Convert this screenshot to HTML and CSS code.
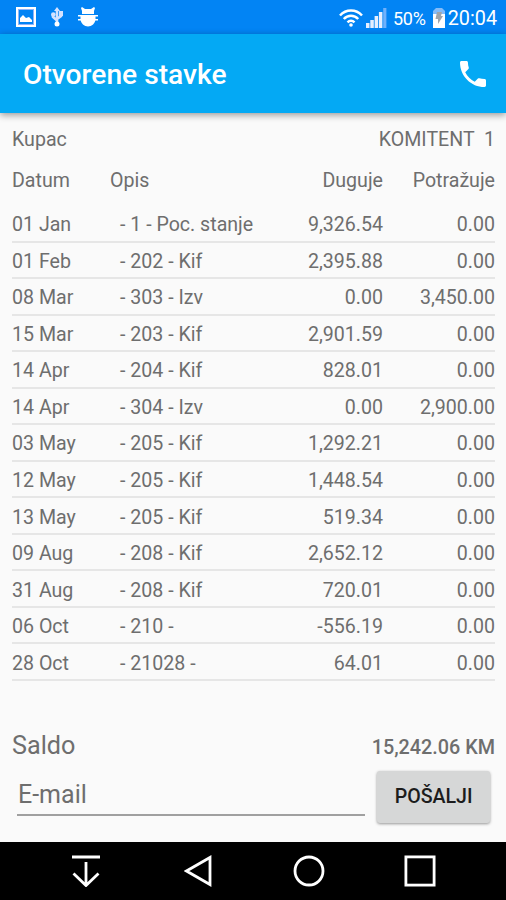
FILE: index.html
```html
<!DOCTYPE html>
<html lang="sr">
<head>
    <meta charset="UTF-8">
    <meta name="viewport" content="width=device-width, initial-scale=1.0">
    <link rel="stylesheet" href="styles.css">
    <title>Otvorene stavke</title>
</head>
<body>
    <div class="status-bar">
        <svg class="icon-picture" width="20" height="20" viewBox="0 0 20 20">
            <rect x="1" y="1" width="18" height="18" fill="none" stroke="#fff" stroke-width="2"/>
            <rect x="2.500" y="2.500" width="15" height="15" fill="none" stroke="#8fb4fb"/>
            <path d="M4 15v-4l3-3 3 3 3-1 3 3v2z" fill="#fff"/>
        </svg>
        <svg class="icon-usb" width="12" height="20" viewBox="0 0 12 20">
            <path d="M6 17V3M6 13.500L2 10V7M6 12l4-3V5" fill="none" stroke="#d5e2ff" stroke-width="2.600"/>
            <path d="M6 0l3 4H3z" fill="#d5e2ff"/>
            <circle cx="6" cy="17" r="2.500" fill="#fff"/>
            <circle cx="2.300" cy="7.500" r="2.300" fill="#d5e2ff"/>
            <rect x="8" y="4" width="4" height="5" fill="#d5e2ff"/>
        </svg>
        <svg class="icon-debug" width="20" height="20" viewBox="0 0 20 20">
            <path d="M4 0l3 2h6l3-2 1 1-1 3v3H4V4L3 1z" fill="#fff"/>
            <path d="M2.500 8h15v4c0 4.500-4 7.500-7.500 7.500S2.500 16.500 2.500 12z" fill="#fff"/>
            <path d="M0 8.800h20M0 12.800h20" stroke="#fff" stroke-width="1.500"/>
        </svg>
        <div class="status-right">
            <svg class="icon-wifi" width="24" height="18" viewBox="0 0 24 18">
                <path d="M1 6.500C7-.2 17-.2 23 6.500M4.800 10c4-4.300 10.400-4.300 14.400 0M8.500 13.300c2-2 5-2 7 0" fill="none" stroke="#fff" stroke-width="2.500"/>
                <circle cx="12" cy="16" r="1.800" fill="#fff"/>
            </svg>
            <svg class="icon-signal" width="21" height="20" viewBox="0 0 21 20">
                <path d="M0 15h3.500v5H0zM4.300 12h3.500v8H4.300zM8.600 8h3.500v12H8.600zM12.900 4h3.500v16h-3.500z" fill="#e6efff"/>
                <path d="M17.200 0h3.200v20h-3.200z" fill="#6fb1fb"/>
            </svg>
            <span class="battery-text">50%</span>
            <svg class="icon-battery" width="14" height="20" viewBox="0 0 14 20">
                <path d="M4 0h6l3 3v4H1V3z" fill="#83bbf8"/>
                <path d="M1 6h12v14H1z" fill="#fff"/>
                <path d="M5 4h5l-1 4h2l-5 8v-5H3.500z" fill="#a0a5ab"/>
            </svg>
            <span class="clock">20:04</span>
        </div>
    </div>

    <div class="toolbar">
        <h1>Otvorene stavke</h1>
        <svg width="26" height="26" viewBox="3 3 18 18">
            <path d="M6.620 10.790c1.440 2.830 3.760 5.140 6.590 6.590l2.200-2.200c.27-.27.67-.36 1.020-.24 1.120.37 2.330.57 3.570.57.55 0 1 .45 1 1V20c0 .55-.45 1-1 1-9.390 0-17-7.610-17-17 0-.55.45-1 1-1h3.500c.55 0 1 .45 1 1 0 1.250.2 2.450.57 3.570.11.35.03.74-.25 1.020l-2.200 2.200z" fill="#fff"/>
        </svg>
    </div>

    <div id="content">
        <div class="customer">
            <span>Kupac</span>
            <span class="customer-name">KOMITENT  1</span>
        </div>

        <table id="items">
            <thead>
                <tr>
                    <th class="date">Datum</th>
                    <th class="desc">Opis</th>
                    <th class="num">Duguje</th>
                    <th class="num">Potražuje</th>
                </tr>
            </thead>
            <tbody>
                <tr><td>01 Jan</td><td>- 1 - Poc. stanje</td><td>9,326.54</td><td>0.00</td></tr>
                <tr><td>01 Feb</td><td>- 202 - Kif</td><td>2,395.88</td><td>0.00</td></tr>
                <tr><td>08 Mar</td><td>- 303 - Izv</td><td>0.00</td><td>3,450.00</td></tr>
                <tr><td>15 Mar</td><td>- 203 - Kif</td><td>2,901.59</td><td>0.00</td></tr>
                <tr><td>14 Apr</td><td>- 204 - Kif</td><td>828.01</td><td>0.00</td></tr>
                <tr><td>14 Apr</td><td>- 304 - Izv</td><td>0.00</td><td>2,900.00</td></tr>
                <tr><td>03 May</td><td>- 205 - Kif</td><td>1,292.21</td><td>0.00</td></tr>
                <tr><td>12 May</td><td>- 205 - Kif</td><td>1,448.54</td><td>0.00</td></tr>
                <tr><td>13 May</td><td>- 205 - Kif</td><td>519.34</td><td>0.00</td></tr>
                <tr><td>09 Aug</td><td>- 208 - Kif</td><td>2,652.12</td><td>0.00</td></tr>
                <tr><td>31 Aug</td><td>- 208 - Kif</td><td>720.01</td><td>0.00</td></tr>
                <tr><td>06 Oct</td><td>- 210 -</td><td>-556.19</td><td>0.00</td></tr>
                <tr><td>28 Oct</td><td>- 21028 -</td><td>64.01</td><td>0.00</td></tr>
            </tbody>
        </table>

        <div class="balance">
            <span class="balance-label">Saldo</span>
            <span class="balance-value">15,242.06 KM</span>
        </div>

        <div class="send">
            <input type="text" id="email" placeholder="E-mail">
            <button id="submit">POŠALJI</button>
        </div>
    </div>

    <div class="nav-bar">
        <svg width="28" height="32" viewBox="0 0 28 32">
            <path d="M0 2h28M14 7v23M1.500 18.500L14 30.500l12.500-12" fill="none" stroke="#fff" stroke-width="2.800"/>
        </svg>
        <svg width="28" height="32" viewBox="0 0 28 32">
            <path d="M26 2.500v27L2.500 16z" fill="none" stroke="#fff" stroke-width="2.800"/>
        </svg>
        <svg width="32" height="32" viewBox="0 0 32 32">
            <circle cx="16" cy="16" r="14" fill="none" stroke="#fff" stroke-width="2.800"/>
        </svg>
        <svg width="32" height="32" viewBox="0 0 32 32">
            <rect x="1.900" y="1.900" width="28.200" height="28.200" fill="none" stroke="#fff" stroke-width="2.800"/>
        </svg>
    </div>
</body>
</html>
```
FILE: styles.css
```css
* {
    box-sizing: border-box;
}

body {
    font-family: Roboto, sans-serif;
    margin: 0;
    height: 900px;
    display: flex;
    flex-direction: column;
    background-color: #fafafa;
    color: #6e6e6e;
    font-size: 19.6px;
    overflow: hidden;
}

.status-bar {
    height: 34px;
    flex: none;
    display: flex;
    align-items: center;
    padding: 0 9px 0 16px;
    background-color: #0284f4;
    color: #fff;
}

.icon-usb {
    margin-left: 15px;
}

.icon-debug {
    margin-left: 15px;
}

.status-right {
    display: flex;
    align-items: center;
    margin-left: auto;
    padding-top: 2px;
}

.icon-signal {
    margin-left: 3px;
}

.battery-text {
    font-size: 18px;
    letter-spacing: -0.2px;
    margin-left: 6px;
}

.icon-battery {
    margin-left: 6px;
}

.clock {
    margin-left: 2px;
    font-size: 19.8px;
}

.toolbar {
    height: 79px;
    flex: none;
    display: flex;
    align-items: center;
    justify-content: space-between;
    padding: 0 20px 0 23px;
    background-color: #04a9f4;
    color: #fff;
    box-shadow: 0 2px 7px rgba(0, 0, 0, 0.4);
}

h1 {
    margin: 2px 0 0;
    font-size: 28.2px;
    font-weight: 500;
}

#content {
    flex: 1;
    padding: 14px 11px 0 12px;
}

.customer {
    display: flex;
    justify-content: space-between;
    line-height: 26px;
    white-space: pre;
}

#items {
    width: 100%;
    table-layout: fixed;
    border-collapse: separate;
    border-spacing: 0;
}

th {
    height: 53px;
    padding: 1px 0 0;
    font-weight: 400;
    text-align: left;
}

.date {
    width: 98px;
}

.num {
    width: 112px;
}

.desc {
    width: 161px;
}

td {
    height: 36.54px;
    padding: 3px 0 0;
    border-bottom: 2px solid #e6e6e6;
}

td:nth-child(2) {
    padding-left: 10px;
    white-space: nowrap;
}

.num, td:nth-child(n+3) {
    text-align: right;
}

.balance {
    display: flex;
    justify-content: space-between;
    align-items: baseline;
    margin-top: 49px;
    line-height: 32px;
}

.balance-label {
    font-size: 25.2px;
}

.balance-value {
    font-weight: 500;
    font-size: 19.8px;
}

.send {
    display: flex;
    align-items: flex-start;
    margin-top: 7px;
    padding: 0 5px;
}

#email {
    width: 349px;
    height: 45px;
    padding: 5px 0 0 1px;
    border: none;
    border-bottom: 2px solid #a0a0a0;
    background: none;
    font-family: inherit;
    font-size: 25px;
}

#email::placeholder {
    color: #6e6e6e;
}

#submit {
    width: 113px;
    height: 52px;
    margin-left: 12px;
    padding: 0;
    background-color: #d6d7d7;
    color: #1c1c1c;
    border: none;
    border-radius: 3px;
    box-shadow: 0 1px 3px rgba(0, 0, 0, 0.4);
    font-family: inherit;
    font-size: 19.6px;
    font-weight: 500;
}

.nav-bar {
    height: 58px;
    flex: none;
    display: grid;
    grid-template-columns: 112px 109px 111px 32px;
    align-items: center;
    padding-left: 72px;
    background-color: #000;
}
```
